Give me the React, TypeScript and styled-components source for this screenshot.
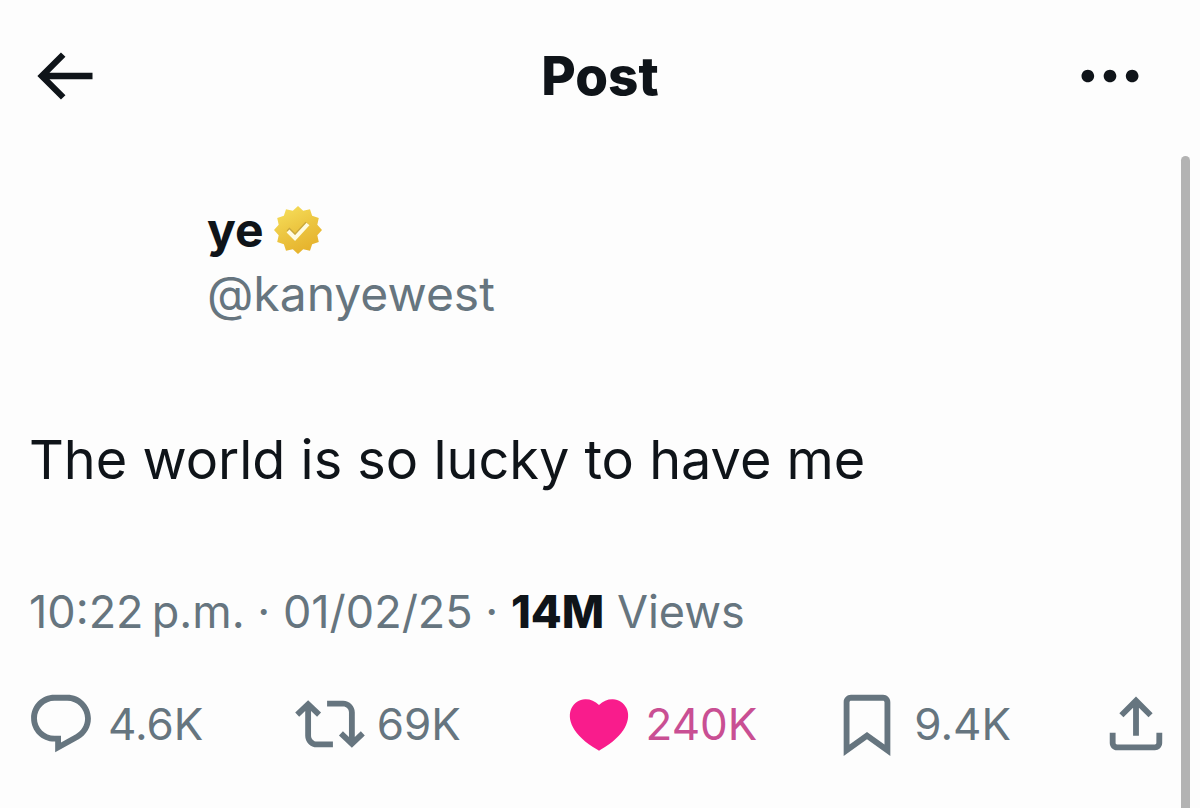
import React from "react";
import styled, { createGlobalStyle } from "styled-components";

const GlobalStyle = createGlobalStyle`
  *, *::before, *::after { box-sizing: border-box; }
  body {
    margin: 0;
    background: #fdfdfd;
    color: #0f1419;
    font-family: Inter, "Liberation Sans", sans-serif;
  }
  h1, h2, p { margin: 0; }
`;

const Page = styled.div`
  display: flex;
  flex-direction: column;
  min-height: 100vh;
`;

const Header = styled.header`
  display: grid;
  grid-template-columns: 1fr auto 1fr;
  align-items: center;
  padding: 38px 26px 40px;
`;

const Title = styled.h1`
  font-size: 53px;
  line-height: 76px;
  font-weight: 800;
`;

const IconButton = styled.button<{ $end?: boolean }>`
  display: flex;
  padding: 0;
  border: 0;
  background: none;
  color: inherit;
  cursor: pointer;
  justify-self: ${(p) => (p.$end ? "end" : "start")};
  margin-right: ${(p) => (p.$end ? "26px" : "0")};
`;

const Icon = styled.svg<{ $size: number }>`
  display: block;
  flex: none;
  width: ${(p) => p.$size}px;
  height: ${(p) => p.$size}px;
  fill: currentColor;
`;

const Body = styled.main`
  display: flex;
  flex: 1;
  gap: 10px;
  padding-right: 10px;
`;

const Article = styled.article`
  flex: 1;
  min-width: 0;
  padding-left: 26px;
`;

const ScrollThumb = styled.div`
  width: 9px;
  margin-top: 2px;
  border-radius: 5px 5px 0 0;
  background: #b3b3b3;
`;

const Author = styled.div`
  padding: 44px 0 0 181px;
`;

const NameRow = styled.div`
  display: flex;
  align-items: center;
  gap: 10px;
`;

const Name = styled.h2`
  font-size: 48px;
  line-height: 64px;
  font-weight: 700;
`;

const Handle = styled.a`
  display: block;
  color: #66757f;
  font-size: 48px;
  line-height: 64px;
  text-decoration: none;
`;

const PostText = styled.p`
  padding: 96px 0 0 3px;
  font-size: 54px;
  line-height: 76px;
`;

const Meta = styled.p`
  padding: 82px 0 0 3px;
  color: #66757f;
  font-size: 45px;
  line-height: 64px;

  strong {
    color: #0f1419;
    font-weight: 800;
  }
`;

const Actions = styled.div`
  display: grid;
  grid-template-columns: repeat(4, 1fr) auto;
  padding: 44px 0 32px;
`;

const Action = styled.button<{ $active?: boolean }>`
  display: flex;
  align-items: center;
  gap: 12px;
  padding: 0;
  border: 0;
  background: none;
  color: ${(p) => (p.$active ? "#c94f93" : "#66757f")};
  font-family: inherit;
  font-size: 44px;
  line-height: 72px;
  cursor: pointer;

  svg {
    color: ${(p) => (p.$active ? "#f91c8c" : "inherit")};
  }
`;

const paths = {
  back: "M7.414 13l5.043 5.04-1.414 1.42L3.586 12l7.457-7.46 1.414 1.42L7.414 11H21v2H7.414z",
  more: "M3 12c0-1.1.9-2 2-2s2 .9 2 2-.9 2-2 2-2-.9-2-2zm9 2c1.1 0 2-.9 2-2s-.9-2-2-2-2 .9-2 2 .9 2 2 2zm7 0c1.1 0 2-.9 2-2s-.9-2-2-2-2 .9-2 2 .9 2 2 2z",
  reply:
    "M1.751 10c0-4.42 3.584-8 8.005-8h4.366c4.49 0 8.129 3.64 8.129 8.13 0 2.96-1.607 5.68-4.196 7.11l-8.054 4.46v-3.69h-.067c-4.49.1-8.183-3.51-8.183-8.01zm8.005-6c-3.317 0-6.005 2.69-6.005 6 0 3.37 2.77 6.08 6.138 6.01l.351-.01h1.761v2.3l5.087-2.81c1.951-1.08 3.163-3.13 3.163-5.36 0-3.39-2.744-6.13-6.129-6.13H9.756z",
  repost:
    "M4.5 3.88l4.432 4.14-1.364 1.46L5.5 7.55V16c0 1.1.896 2 2 2H13v2H7.5c-2.209 0-4-1.79-4-4V7.55L1.432 9.48.068 8.02 4.5 3.88zM16.5 6H11V4h5.5c2.209 0 4 1.79 4 4v8.45l2.068-1.93 1.364 1.46-4.432 4.14-4.432-4.14 1.364-1.46 2.068 1.93V8c0-1.1-.896-2-2-2z",
  like: "M20.884 13.19c-1.351 2.48-4.001 5.12-8.379 7.67l-.503.3-.504-.3c-4.379-2.55-7.029-5.19-8.382-7.67-1.36-2.5-1.41-4.86-.514-6.67.887-1.79 2.647-2.91 4.601-3.01 1.651-.09 3.368.56 4.798 2.01 1.429-1.45 3.146-2.1 4.796-2.01 1.954.1 3.714 1.22 4.601 3.01.896 1.81.846 4.17-.514 6.67z",
  bookmark:
    "M4 4.5C4 3.12 5.119 2 6.5 2h11C18.881 2 20 3.12 20 4.5v18.44l-8-5.71-8 5.71V4.5zM6.5 4c-.276 0-.5.22-.5.5v14.56l6-4.29 6 4.29V4.5c0-.28-.224-.5-.5-.5h-11z",
  share:
    "M12 2.59l5.7 5.7-1.41 1.42L13 6.41V16h-2V6.41l-3.3 3.3-1.41-1.42L12 2.59zM21 15l-.02 3.51c0 1.38-1.12 2.49-2.5 2.49H5.5C4.11 21 3 19.88 3 18.5V15h2v3.5c0 .28.22.5.5.5h12.98c.28 0 .5-.22.5-.5L19 15h2z",
};

function Glyph({ name, size = 70 }: { name: keyof typeof paths; size?: number }) {
  return (
    <Icon $size={size} viewBox="0 0 24 24" aria-hidden="true">
      <path d={paths[name]} />
    </Icon>
  );
}

// Twelve-pointed seal, alternating between the outer and inner radius.
const sealPoints = Array.from({ length: 24 }, (_, i) => {
  const radius = i % 2 === 0 ? 24 : 20;
  const angle = (i * Math.PI) / 12 - Math.PI / 2;
  return `${(24 + radius * Math.cos(angle)).toFixed(2)},${(24 + radius * Math.sin(angle)).toFixed(2)}`;
}).join(" ");

function VerifiedBadge() {
  return (
    <Icon $size={48} viewBox="0 0 48 48" role="img" aria-label="Verified">
      <defs>
        <linearGradient id="seal" x1="0.2" y1="0" x2="0.7" y2="1">
          <stop offset="0" stopColor="#f6de5a" />
          <stop offset="0.5" stopColor="#ecc540" />
          <stop offset="1" stopColor="#e5b02a" />
        </linearGradient>
      </defs>
      <polygon points={sealPoints} fill="url(#seal)" />
      <path d="M14 23l7 7L33 17" fill="none" stroke="#c9a83c" strokeWidth="4" />
      <path d="M14 25l7 7L34 18" fill="none" stroke="#fffbe0" strokeWidth="4" />
    </Icon>
  );
}

const counts: { icon: keyof typeof paths; label: string; count: string; active?: boolean }[] = [
  { icon: "reply", label: "Reply", count: "4.6K" },
  { icon: "repost", label: "Repost", count: "69K" },
  { icon: "like", label: "Like", count: "240K", active: true },
  { icon: "bookmark", label: "Bookmark", count: "9.4K" },
];

export default function App() {
  return (
    <Page>
      <GlobalStyle />
      <Header>
        <IconButton aria-label="Back">
          <Glyph name="back" size={76} />
        </IconButton>
        <Title>Post</Title>
        <IconButton $end aria-label="More">
          <Glyph name="more" size={76} />
        </IconButton>
      </Header>
      <Body>
        <Article>
          <Author>
            <NameRow>
              <Name>ye</Name>
              <VerifiedBadge />
            </NameRow>
            <Handle href="#kanyewest">@kanyewest</Handle>
          </Author>
          <PostText>The world is so lucky to have me</PostText>
          <Meta>
            10:22{"\u2009"}p.m. · 01/02/25 · <strong>14M</strong> Views
          </Meta>
          <Actions>
            {counts.map((c) => (
              <Action key={c.icon} $active={c.active} title={c.label}>
                <Glyph name={c.icon} />
                {c.count}
              </Action>
            ))}
            <Action aria-label="Share">
              <Glyph name="share" />
            </Action>
          </Actions>
        </Article>
        <ScrollThumb />
      </Body>
    </Page>
  );
}
